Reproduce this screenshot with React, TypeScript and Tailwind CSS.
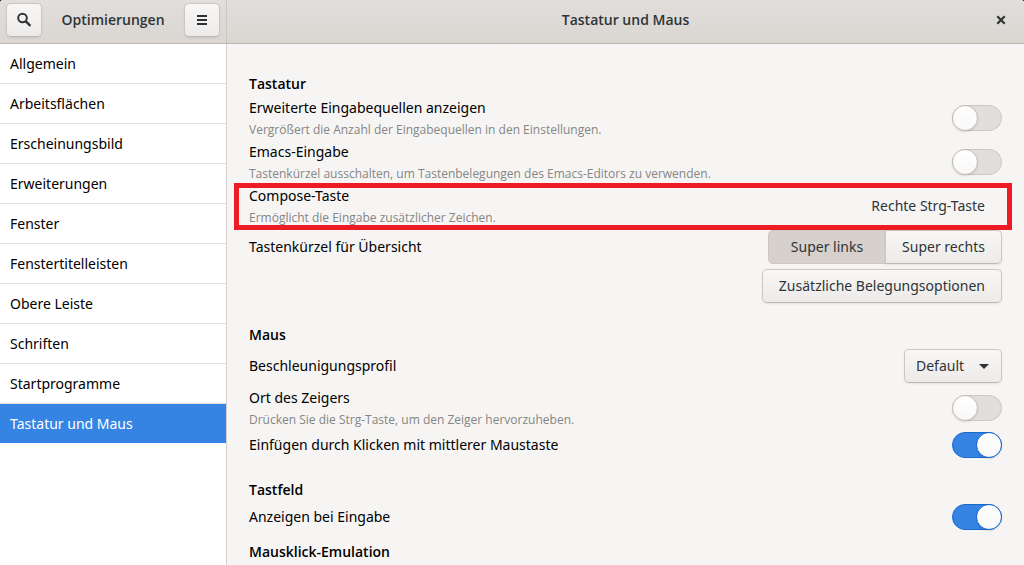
import { useId, useState, type ReactNode } from "react";

const PAGES = [
  "Allgemein",
  "Arbeitsflächen",
  "Erscheinungsbild",
  "Erweiterungen",
  "Fenster",
  "Fenstertitelleisten",
  "Obere Leiste",
  "Schriften",
  "Startprogramme",
  "Tastatur und Maus",
];

const RAISED =
  "border border-[#cdc7c2] border-b-[#bfb8b1] bg-linear-to-b from-[#f8f7f6] to-[#edebe9] shadow-[0_1px_2px_rgba(0,0,0,0.08)]";

function SearchIcon() {
  return (
    <svg width="16" height="16" viewBox="0 0 16 16" fill="none" stroke="#2e3436" strokeWidth="2" aria-hidden="true">
      <circle cx="6.5" cy="6" r="4.3" />
      <path d="M9.6 9.1 14.4 13.9" strokeWidth="2.3" />
    </svg>
  );
}

function MenuIcon() {
  return (
    <svg width="16" height="16" viewBox="0 0 16 16" fill="#2e3436" aria-hidden="true">
      <path d="M3 3h10v2H3zM3 7h10v2H3zM3 11h10v2H3z" />
    </svg>
  );
}

function CloseIcon() {
  return (
    <svg width="16" height="16" viewBox="0 0 16 16" fill="none" stroke="#2e3436" strokeWidth="2.2" aria-hidden="true">
      <path d="M4.3 4.3 11.7 11.7M11.7 4.3 4.3 11.7" />
    </svg>
  );
}

function Heading({ children }: { children: ReactNode }) {
  return <h2 className="font-['Open_Sans',sans-serif] font-semibold leading-5">{children}</h2>;
}

function RowText({ title, hint, id }: { title: string; hint?: string; id?: string }) {
  return (
    <div className={hint ? "min-w-0 flex-1 pt-0.5" : "min-w-0 flex-1"}>
      {id ? (
        <label htmlFor={id} className="block leading-5">{title}</label>
      ) : (
        <div className="leading-5">{title}</div>
      )}
      {hint && <p className="pt-0.5 font-['Open_Sans',sans-serif] text-xs leading-5 text-[#858583]">{hint}</p>}
    </div>
  );
}

function SwitchRow({ title, hint, initial = false }: { title: string; hint?: string; initial?: boolean }) {
  const id = useId();
  const [on, setOn] = useState(initial);
  return (
    <div className={hint ? "flex h-11 items-center" : "flex items-center"}>
      <RowText title={title} hint={hint} id={id} />
      <input
        id={id}
        type="checkbox"
        role="switch"
        checked={on}
        onChange={() => setOn(!on)}
        className="flex h-[26px] w-[50px] shrink-0 appearance-none items-center rounded-full border border-[#cdc7c2] bg-[#e1dedb] before:-ml-px before:size-[26px] before:rounded-full before:border before:border-[#c5beb8] before:bg-linear-to-b before:from-white before:to-[#f8f8f7] before:shadow-[0_1px_2px_rgba(0,0,0,0.12)] checked:border-[#1b6acb] checked:bg-[#3584e4] checked:before:-mr-px checked:before:ml-auto checked:before:border-[#1b6acb]"
      />
    </div>
  );
}

export default function App() {
  const profileId = useId();
  const [page, setPage] = useState("Tastatur und Maus");
  const [side, setSide] = useState("links");
  return (
    <div className="bg-black font-['Noto_Sans',sans-serif] text-sm text-black">
      <div className="flex h-screen flex-col overflow-hidden rounded-t-[3px] bg-[#f6f5f4]">
        <header className="flex h-11 shrink-0 border-b border-[#bfb8b1] bg-linear-to-b from-[#e1dedb] to-[#dad6d2] font-['Open_Sans',sans-serif] text-[#2e3436]">
          <div className="flex w-[227px] shrink-0 items-center justify-between border-r border-[#cdc7c2] px-1.5 pb-1">
            <button type="button" aria-label="Suchen" className={`flex h-[34px] w-9 items-center justify-center rounded-[5px] ${RAISED}`}>
              <SearchIcon />
            </button>
            <h1 className="font-semibold">Optimierungen</h1>
            <button type="button" aria-label="Menü" className={`flex h-[34px] w-9 items-center justify-center rounded-[5px] ${RAISED}`}>
              <MenuIcon />
            </button>
          </div>
          <div className="grid flex-1 grid-cols-[1fr_auto_1fr] items-center px-[15px] pb-1">
            <div />
            <h1 className="font-semibold">Tastatur und Maus</h1>
            <button type="button" aria-label="Schließen" className="justify-self-end">
              <CloseIcon />
            </button>
          </div>
        </header>

        <div className="flex min-h-0 flex-1">
          <nav className="w-[227px] shrink-0 border-r border-[#d5d0cc] bg-white">
            {PAGES.map((name) => (
              <button
                key={name}
                type="button"
                onClick={() => setPage(name)}
                aria-current={name === page ? "page" : undefined}
                className={
                  name === page
                    ? "block h-10 w-full border-b border-white bg-[#3584e4] bg-clip-padding px-2.5 text-left text-white"
                    : "block h-10 w-full border-b border-[#e1dedb] px-2.5 text-left"
                }
              >
                {name}
              </button>
            ))}
          </nav>

          <main className="min-w-0 flex-1 overflow-hidden px-[22px] pt-[30px]">
            <section>
              <Heading>Tastatur</Heading>
              <div className="pt-0.5">
                <SwitchRow title="Erweiterte Eingabequellen anzeigen" hint="Vergrößert die Anzahl der Eingabequellen in den Einstellungen." />
                <SwitchRow title="Emacs-Eingabe" hint="Tastenkürzel ausschalten, um Tastenbelegungen des Emacs-Editors zu verwenden." />
                <div className="relative flex h-11 items-center">
                  <RowText title="Compose-Taste" hint="Ermöglicht die Eingabe zusätzlicher Zeichen." />
                  <button type="button" className="px-[17px] text-[#2e3436]">Rechte Strg-Taste</button>
                  <div className="pointer-events-none absolute -top-px -right-2.5 -bottom-0.5 -left-[15px] z-10 border-5 border-[#ed1c24]" />
                </div>
              </div>
              <div className="flex items-center pt-0.5">
                <RowText title="Tastenkürzel für Übersicht" />
                <div className="flex text-[#2e3436]">
                  <button
                    type="button"
                    aria-pressed={side === "links"}
                    onClick={() => setSide("links")}
                    className={`h-[34px] w-[118px] rounded-l-[5px] ${side === "links" ? "border border-[#cdc7c2] bg-[#d6d1cd]" : RAISED}`}
                  >
                    Super links
                  </button>
                  <button
                    type="button"
                    aria-pressed={side === "rechts"}
                    onClick={() => setSide("rechts")}
                    className={`-ml-px h-[34px] w-[117px] rounded-r-[5px] ${side === "rechts" ? "border border-[#cdc7c2] bg-[#d6d1cd]" : RAISED}`}
                  >
                    Super rechts
                  </button>
                </div>
              </div>
              <div className="flex justify-end pt-[5px]">
                <button type="button" className={`h-[34px] rounded-[5px] px-4 text-[#2e3436] ${RAISED}`}>
                  Zusätzliche Belegungsoptionen
                </button>
              </div>
            </section>

            <section className="pt-[22px]">
              <Heading>Maus</Heading>
              <div className="flex items-center pt-1">
                <RowText title="Beschleunigungsprofil" id={profileId} />
                <div className="relative">
                  <select
                    id={profileId}
                    defaultValue="Default"
                    className={`block h-[34px] w-[98px] appearance-none rounded-[5px] pl-[11px] text-[#2e3436] ${RAISED}`}
                  >
                    <option>Default</option>
                  </select>
                  <svg width="10" height="5" viewBox="0 0 10 5" className="pointer-events-none absolute top-[15px] right-[13px]" aria-hidden="true">
                    <path d="M0 0h10L5 5z" fill="#2e3436" />
                  </svg>
                </div>
              </div>
              <div className="pt-[3px]">
                <SwitchRow title="Ort des Zeigers" hint="Drücken Sie die Strg-Taste, um den Zeiger hervorzuheben." />
              </div>
              <div className="pt-0.5">
                <SwitchRow title="Einfügen durch Klicken mit mittlerer Maustaste" initial />
              </div>
            </section>

            <section className="pt-[22px]">
              <Heading>Tastfeld</Heading>
              <div className="pt-1">
                <SwitchRow title="Anzeigen bei Eingabe" initial />
              </div>
            </section>

            <section className="pt-3">
              <Heading>Mausklick-Emulation</Heading>
            </section>
          </main>
        </div>
      </div>
    </div>
  );
}
